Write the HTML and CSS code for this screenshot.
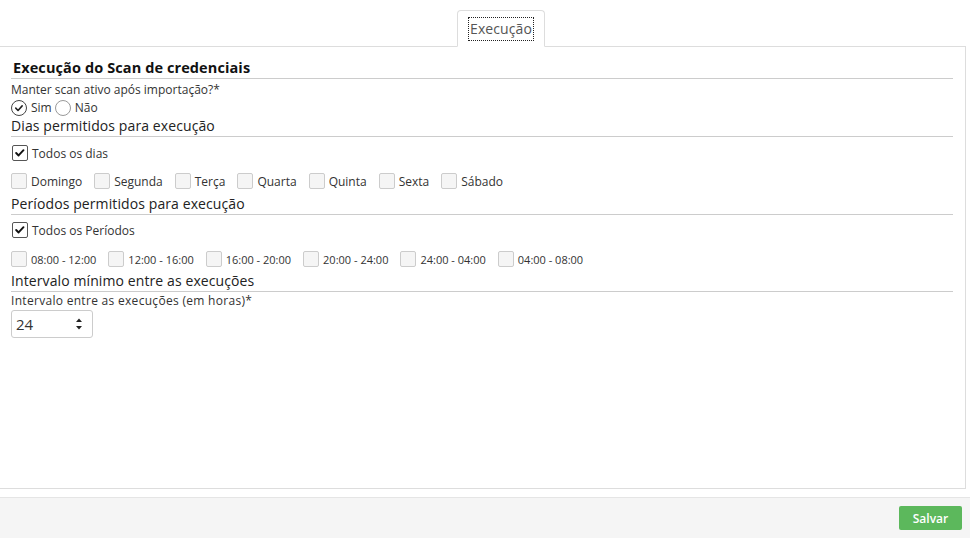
FILE: index.html
```html
<!DOCTYPE html>
<html lang="pt-BR">
<head>
<meta charset="utf-8">
<title>Execução</title>
<link rel="stylesheet" href="styles.css">
</head>
<body>
<div class="page">
  <div class="tabs">
    <div class="tab active"><span class="tab-label">Execução</span></div>
  </div>
  <div class="panel">
    <h3 class="main-title">Execução do Scan de credenciais</h3>
    <div class="field-label">Manter scan ativo após importação?*</div>
    <div class="radio-row">
      <span class="radio checked"><svg viewBox="0 0 16 16" width="16" height="16"><path d="M4.3 8.2 L6.9 10.8 L11.6 5.6" fill="none" stroke="#222" stroke-width="1.8" stroke-linecap="round" stroke-linejoin="round"/></svg></span><span class="opt">Sim</span>
      <span class="radio"></span><span class="opt">Não</span>
    </div>

    <h4 class="section-title">Dias permitidos para execução</h4>
    <div class="check-row first">
      <span class="check checked"><svg viewBox="0 0 16 16" width="14" height="14"><path d="M3.6 8 L6.4 10.8 L12 4.8" fill="none" stroke="#111" stroke-width="2.2" stroke-linecap="round" stroke-linejoin="round"/></svg></span><span class="opt">Todos os dias</span>
    </div>
    <div class="check-row second">
      <span class="item"><span class="check"></span><span class="opt">Domingo</span></span>
      <span class="item"><span class="check"></span><span class="opt">Segunda</span></span>
      <span class="item"><span class="check"></span><span class="opt">Terça</span></span>
      <span class="item"><span class="check"></span><span class="opt">Quarta</span></span>
      <span class="item"><span class="check"></span><span class="opt">Quinta</span></span>
      <span class="item"><span class="check"></span><span class="opt">Sexta</span></span>
      <span class="item"><span class="check"></span><span class="opt">Sábado</span></span>
    </div>

    <h4 class="section-title t-periodos">Períodos permitidos para execução</h4>
    <div class="check-row first p">
      <span class="check checked"><svg viewBox="0 0 16 16" width="14" height="14"><path d="M3.6 8 L6.4 10.8 L12 4.8" fill="none" stroke="#111" stroke-width="2.2" stroke-linecap="round" stroke-linejoin="round"/></svg></span><span class="opt">Todos os Períodos</span>
    </div>
    <div class="check-row second p digits">
      <span class="item"><span class="check"></span><span class="opt">08:00 - 12:00</span></span>
      <span class="item"><span class="check"></span><span class="opt">12:00 - 16:00</span></span>
      <span class="item"><span class="check"></span><span class="opt">16:00 - 20:00</span></span>
      <span class="item"><span class="check"></span><span class="opt">20:00 - 24:00</span></span>
      <span class="item"><span class="check"></span><span class="opt">24:00 - 04:00</span></span>
      <span class="item"><span class="check"></span><span class="opt">04:00 - 08:00</span></span>
    </div>

    <h4 class="section-title t-intervalo">Intervalo mínimo entre as execuções</h4>
    <div class="field-label small">Intervalo entre as execuções (em horas)*</div>
    <div class="number-input">
      <span class="value">24</span>
      <svg class="spin" viewBox="0 0 10 16" width="10" height="16"><path d="M2 6 L5 2.5 L8 6 Z" fill="#222"/><path d="M2 10 L5 13.5 L8 10 Z" fill="#222"/></svg>
    </div>
  </div>
  <div class="footer">
    <button class="btn-save">Salvar</button>
  </div>
</div>
</body>
</html>
```

FILE: styles.css
```css
* { box-sizing: border-box; }
html, body {
  margin: 0;
  padding: 0;
  background: #fff;
}
body {
  font-family: "Open Sans", "Noto Sans", sans-serif;
  color: #333;
  width: 970px;
  height: 538px;
  overflow: hidden;
}
.page {
  display: flex;
  flex-direction: column;
  height: 538px;
}
.tabs {
  display: flex;
  padding-left: 457px;
  padding-top: 10px;
  height: 47px;
  position: relative;
  z-index: 1;
  margin-bottom: -1px;
}
.tab {
  width: 88px;
  height: 37px;
  border: 1px solid #ddd;
  border-bottom-color: #fff;
  border-radius: 4px 4px 0 0;
  background: #fff;
  display: flex;
  align-items: center;
  justify-content: center;
}
.tab-label {
  font-size: 14px;
  color: #555;
  outline: 1px dotted #222;
  padding: 2px 0 3px;
  line-height: 17px;
  width: 64px;
  text-align: center;
  letter-spacing: 0.1px;
}
.panel {
  width: 966px;
  height: 443px;
  border: 1px solid #ddd;
  border-left: none;
  padding: 0 12px 0 11px;
}
.main-title {
  margin: 0;
  padding: 10px 0 0 2px;
  font-size: 14.5px;
  font-weight: 700;
  line-height: 21px;
  color: #111;
  border-bottom: 1px solid #ccc;
  letter-spacing: 0.1px;
}
.field-label {
  font-size: 12px;
  line-height: 20px;
  height: 20px;
  color: #333;
  padding-top: 1px;
}
.field-label.small {
  height: 18px;
  line-height: 18px;
  padding-top: 0;
  letter-spacing: 0.3px;
}
.radio-row {
  display: flex;
  align-items: center;
  height: 17px;
  font-size: 12px;
}
.radio {
  width: 16px;
  height: 16px;
  border: 1px solid #999;
  border-radius: 50%;
  background: #fff;
  display: inline-flex;
  align-items: center;
  justify-content: center;
  flex: none;
}
.radio.checked { border-color: #444; }
.radio svg { display: block; }
.radio-row .opt { margin: 0 3px 0 4px; }
.section-title {
  margin: 0;
  font-size: 14px;
  font-weight: 400;
  line-height: 20px;
  color: #222;
  border-bottom: 1px solid #ccc;
  letter-spacing: 0.1px;
}
.section-title.t-periodos { padding-top: 5px; }
.section-title.t-intervalo { padding-top: 4px; }
.check-row {
  display: flex;
  align-items: center;
  height: 16px;
  font-size: 12px;
  color: #333;
}
.check-row.digits { font-size: 11px; }
.check-row.first { margin-top: 8px; }
.check-row.second { margin-top: 12px; }
.check-row.first.p { margin-top: 7px; }
.check-row.second.p { margin-top: 13px; }
.item {
  display: inline-flex;
  align-items: center;
  margin-right: 12px;
}
.check {
  width: 16px;
  height: 16px;
  border: 1px solid #ccc;
  border-radius: 2px;
  background: #f5f5f5;
  display: inline-flex;
  align-items: center;
  justify-content: center;
  flex: none;
}
.check.checked {
  background: #fff;
  border-color: #555;
  margin-left: 1px;
}
.check svg { display: block; }
.opt { margin-left: 4px; white-space: nowrap; }
.number-input {
  margin-top: 0;
  width: 82px;
  height: 28px;
  border: 1px solid #ccc;
  border-radius: 3px;
  display: flex;
  align-items: center;
  justify-content: space-between;
  padding: 0 8px 0 4px;
  font-size: 15px;
  color: #333;
}
.spin { display: block; }
.footer {
  margin-top: 8px;
  flex: 1;
  background: #f5f5f5;
  border-top: 1px solid #e5e5e5;
  display: flex;
  justify-content: flex-end;
  align-items: flex-start;
  padding: 8px 8px 0 0;
}
.btn-save {
  width: 63px;
  height: 24px;
  border: none;
  border-radius: 2px;
  background: #5cb85c;
  color: #fff;
  font-family: "Open Sans", sans-serif;
  font-size: 12px;
  font-weight: 600;
  padding: 0;
}
```
